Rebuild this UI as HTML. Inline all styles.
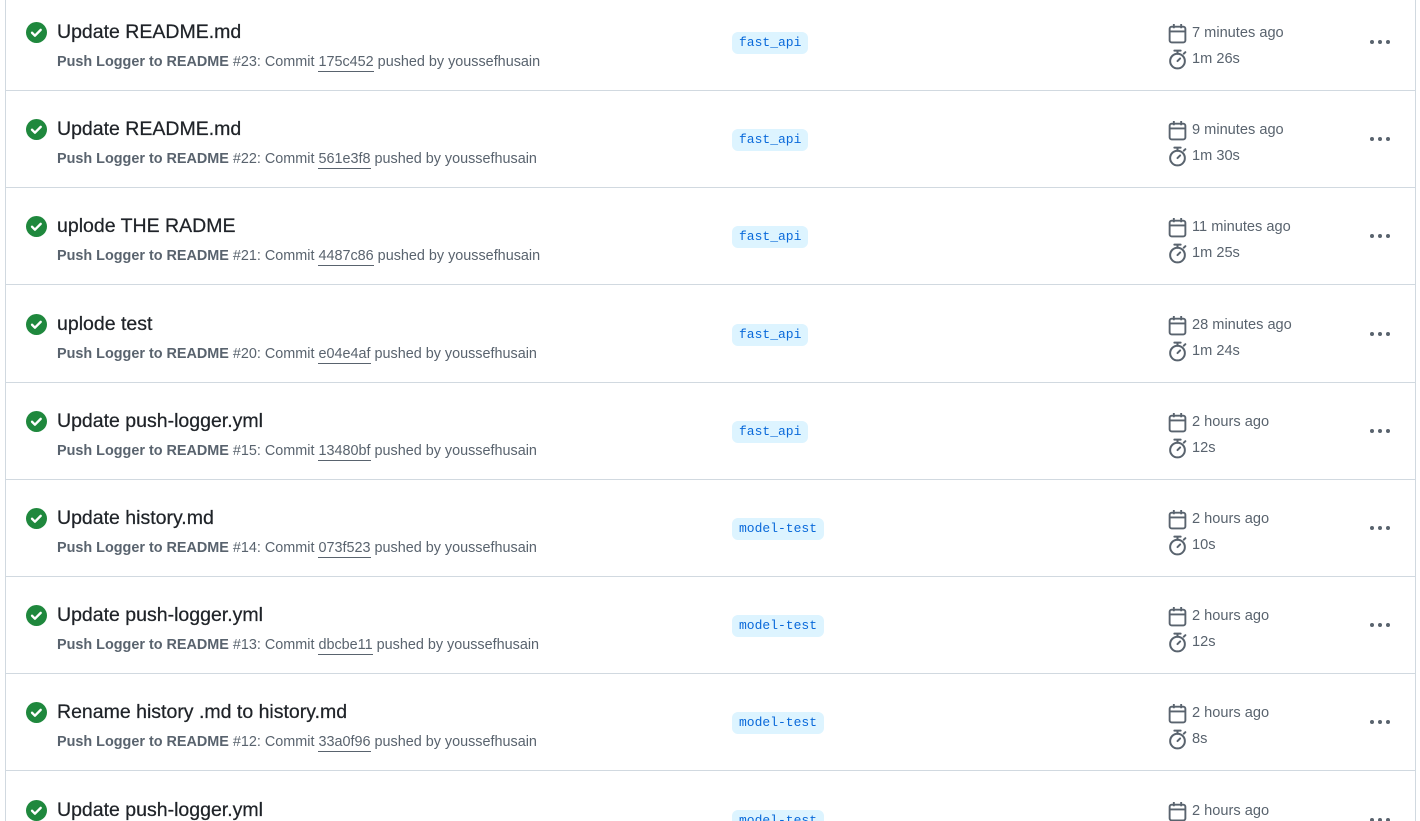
<!DOCTYPE html>
<html><head><meta charset="utf-8"><style>
html,body{margin:0;padding:0;background:#fff;width:1420px;height:821px;overflow:hidden;font-family:"Segoe UI","Liberation Sans",sans-serif;color:#1f2328}
.wrap{position:absolute;left:5px;top:-10px;width:1409px;height:831px;overflow:hidden;border-left:1px solid #d1d9e0;border-right:1px solid #d1d9e0}
.row{position:absolute;left:0;width:1409px;height:97px;border-bottom:1px solid #d1d9e0}
.ck{position:absolute;left:20px;top:29px}
.t{position:absolute;left:51px;top:26px;font-size:19.5px;line-height:26px;white-space:nowrap;-webkit-text-stroke:0.25px #1f2328}
.s{position:absolute;left:51px;top:59px;font-size:14.4px;line-height:20px;color:#59636e;white-space:nowrap}
.s b{font-weight:600}
.s u{text-decoration:none;border-bottom:1px solid #59636e;padding-bottom:1px}
.lab{position:absolute;left:726px;top:39px;height:22px;line-height:22px;padding:0 7px;border-radius:6px;background:#ddf4ff;color:#0969da;font-family:"Liberation Mono",monospace;font-size:13px}
.d{position:absolute;left:1162px;font-size:14.6px;color:#59636e;line-height:20px;white-space:nowrap}
.d svg{position:absolute;left:0;top:0}
.d span{position:absolute;left:24px;top:0}
.dots{position:absolute;left:1363px;top:46px}
</style></head><body><div class="wrap">
<script>
const rows=[
["Update README.md","#23","175c452","fast_api","7 minutes ago","1m 26s"],
["Update README.md","#22","561e3f8","fast_api","9 minutes ago","1m 30s"],
["uplode THE RADME","#21","4487c86","fast_api","11 minutes ago","1m 25s"],
["uplode test","#20","e04e4af","fast_api","28 minutes ago","1m 24s"],
["Update push-logger.yml","#15","13480bf","fast_api","2 hours ago","12s"],
["Update history.md","#14","073f523","model-test","2 hours ago","10s"],
["Update push-logger.yml","#13","dbcbe11","model-test","2 hours ago","12s"],
["Rename history .md to history.md","#12","33a0f96","model-test","2 hours ago","8s"],
["Update push-logger.yml","#11","aaaaaaa","model-test","2 hours ago","9s"]];
let h='';
rows.forEach((r,i)=>{const top=Math.round(3+97.2*i);
h+=`<div class="row" style="top:${top}px">
<svg class="ck" width="21" height="21" viewBox="0 0 16 16"><circle cx="8" cy="8" r="8" fill="#1f883d"/><path d="M4.6 8.2l2.2 2.2 4.4-4.4" stroke="#fff" stroke-width="1.8" fill="none" stroke-linecap="round" stroke-linejoin="round"/></svg>
<div class="t">${r[0]}</div>
<div class="s"><b>Push Logger to README</b> ${r[1]}: Commit <u>${r[2]}</u> pushed by youssefhusain</div>
<div class="lab">${r[3]}</div>
<div class="d" style="top:30px"><svg width="19" height="21" viewBox="0 0 18 20"><rect x="1.5" y="3.5" width="15" height="15" rx="2" fill="none" stroke="#59636e" stroke-width="1.8"/><path d="M1.5 8h15M5.5 1v4M12.5 1v4" stroke="#59636e" stroke-width="1.8"/></svg><span>${r[4]}</span></div>
<div class="d" style="top:56px"><svg width="19" height="21" viewBox="0 0 18 20"><circle cx="9" cy="11.5" r="7" fill="none" stroke="#59636e" stroke-width="1.9"/><path d="M6 1.5h6M9 2v2.5M9 11.5l2.5-2.5M15 4.5l1.5-1.5" stroke="#59636e" stroke-width="1.9" stroke-linecap="round"/></svg><span>${r[5]}</span></div>
<svg class="dots" width="22" height="6"><circle cx="3" cy="3" r="2" fill="#59636e"/><circle cx="11" cy="3" r="2" fill="#59636e"/><circle cx="19" cy="3" r="2" fill="#59636e"/></svg>
</div>`;});
document.write(h);
</script>
</div></body></html>
